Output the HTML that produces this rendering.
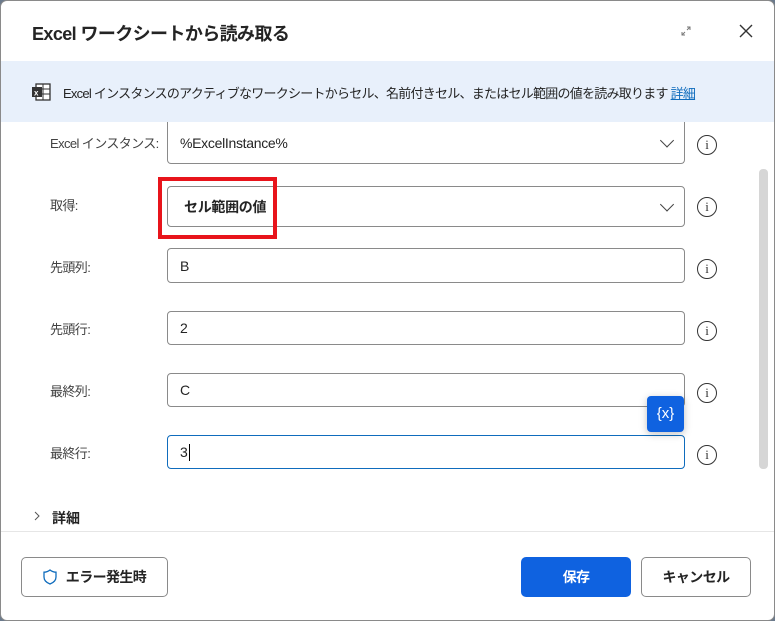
<!DOCTYPE html>
<html><head><meta charset="utf-8"><style>
*{box-sizing:border-box;margin:0;padding:0}
body{width:775px;height:621px;overflow:hidden;background:#6b7a8c;font-family:"Liberation Sans","Noto Sans CJK JP",sans-serif;color:#242424;position:relative}
.dlg{position:absolute;left:0;top:0;width:775px;height:621px;background:#fff;border:1px solid #8a8a8a;border-radius:7px;overflow:hidden}
.abs{position:absolute}
.title{left:31px;top:19px;font-size:18px;font-weight:bold;color:#242424;letter-spacing:-0.6px}
.banner{left:0;top:60px;width:775px;height:61px;background:#e8f0fb}
.btxt{left:62px;top:82px;font-size:13px;color:#242424;white-space:nowrap;letter-spacing:-0.75px}
.btxt a{color:#0f6cbd;text-decoration:underline}
.lbl{left:49px;font-size:13px;color:#424242;letter-spacing:-0.6px}
.box{left:166px;width:518px;border:1px solid #8a8a8a;border-radius:4px;background:#fff;font-size:14px;padding-left:12px;display:flex;align-items:center;letter-spacing:-0.3px}
.info{left:696px;width:20px;height:20px;border:1.5px solid #333;border-radius:50%;font-size:13px;text-align:center;line-height:17px;font-family:"Liberation Serif",serif;color:#333}
.chev{position:absolute;right:12px;top:50%;width:10px;height:10px;border-right:1.5px solid #444;border-bottom:1.5px solid #444;transform:translateY(-75%) rotate(45deg)}
.btn{height:40px;border:1px solid #8a8a8a;border-radius:5px;background:#fff;font-size:14px;font-weight:bold;display:flex;align-items:center;justify-content:center;letter-spacing:-0.6px}
</style></head><body>
<div class="dlg">
<div class="abs title">Excel ワークシートから読み取る</div>
<svg class="abs" style="left:680px;top:25px" width="10" height="10" viewBox="0 0 10 10"><path d="M1 9 L4 6 M6 4 L9 1 M6 1 H9 V4 M1 6 V9 H4" fill="none" stroke="#777" stroke-width="1"/></svg>
<svg class="abs" style="left:738px;top:23px" width="14" height="14" viewBox="0 0 14 14"><path d="M1 1 L13 13 M13 1 L1 13" stroke="#333" stroke-width="1.4"/></svg>
<div class="abs banner"></div>
<svg class="abs" style="left:30px;top:82px" width="20" height="18" viewBox="0 0 20 18"><rect x="5" y="1" width="14" height="16" fill="#fff" stroke="#333" stroke-width="1.3"/><line x1="12" y1="1" x2="12" y2="17" stroke="#333"/><line x1="5" y1="6" x2="19" y2="6" stroke="#333"/><line x1="5" y1="11" x2="19" y2="11" stroke="#333"/><rect x="1" y="4" width="10" height="10" fill="#333"/><text x="3" y="12.5" font-size="8" fill="#fff" font-family="Liberation Sans" font-weight="bold">x</text></svg>
<div class="abs btxt">Excel インスタンスのアクティブなワークシートからセル、名前付きセル、またはセル範囲の値を読み取ります <a>詳細</a></div>

<div class="abs lbl" style="top:132px">Excel インスタンス:</div>
<div class="abs box" style="top:121px;height:42px;border-top:none;border-radius:0 0 4px 4px">%ExcelInstance%<span class="chev"></span></div>
<div class="abs info" style="top:134px">i</div>

<div class="abs lbl" style="top:194px">取得:</div>
<div class="abs box" style="top:185px;height:41px;font-weight:bold;padding-left:16px">セル範囲の値<span class="chev"></span></div>
<div class="abs info" style="top:196px">i</div>
<div class="abs" style="left:157px;top:176px;width:119px;height:62px;border:4px solid #e8141b"></div>

<div class="abs lbl" style="top:256px">先頭列:</div>
<div class="abs box" style="top:247px;height:35px">B</div>
<div class="abs info" style="top:258px">i</div>

<div class="abs lbl" style="top:318px">先頭行:</div>
<div class="abs box" style="top:310px;height:34px">2</div>
<div class="abs info" style="top:320px">i</div>

<div class="abs lbl" style="top:380px">最終列:</div>
<div class="abs box" style="top:372px;height:34px">C</div>
<div class="abs info" style="top:382px">i</div>

<div class="abs lbl" style="top:442px">最終行:</div>
<div class="abs box" style="top:434px;height:34px;border-color:#0f6cbd">3<span style="display:inline-block;width:1.5px;height:17px;background:#000;margin-left:1px"></span></div>
<div class="abs info" style="top:444px">i</div>

<div class="abs" style="left:646px;top:395px;width:37px;height:36px;background:#0f62e0;border-radius:4px;color:#fff;font-size:15px;text-align:center;line-height:35px;box-shadow:0 2px 8px rgba(0,0,0,.25)">{x}</div>

<div class="abs" style="left:758px;top:168px;width:9px;height:300px;background:#d6d6d6;border-radius:4px"></div>

<svg class="abs" style="left:33px;top:510px" width="6" height="10" viewBox="0 0 6 10"><path d="M1 1 L5 5 L1 9" fill="none" stroke="#555" stroke-width="1"/></svg>
<div class="abs" style="left:51px;top:507px;font-size:14px;font-weight:bold">詳細</div>
<div class="abs" style="left:0;top:530px;width:775px;height:1px;background:#e6e6e6"></div>

<div class="abs btn" style="left:20px;top:556px;width:147px"><svg width="14" height="16" viewBox="0 0 14 16" style="margin-right:9px"><path d="M7 1 C5 2.6 3 3.2 1 3.2 V8 C1 11.5 3.8 13.8 7 15 C10.2 13.8 13 11.5 13 8 V3.2 C11 3.2 9 2.6 7 1Z" fill="none" stroke="#0f6cbd" stroke-width="1.3"/></svg>エラー発生時</div>
<div class="abs btn" style="left:520px;top:556px;width:110px;background:#0f62e0;border-color:#0f62e0;color:#fff">保存</div>
<div class="abs btn" style="left:640px;top:556px;width:110px">キャンセル</div>
</div>
</body></html>
